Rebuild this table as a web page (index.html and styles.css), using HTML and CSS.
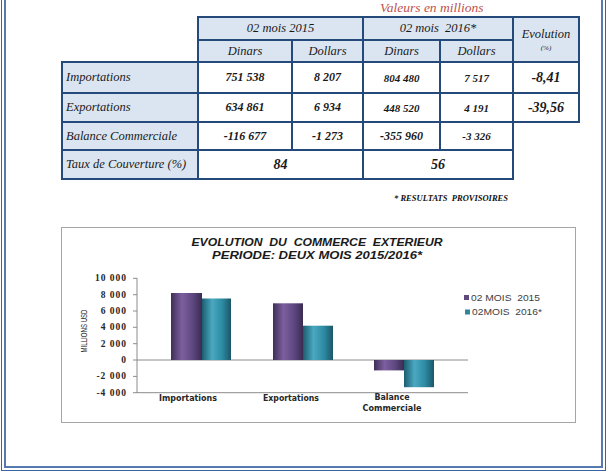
FILE: index.html
```html
<!DOCTYPE html>
<html lang="fr">
<head>
<meta charset="utf-8">
<title>Commerce extérieur</title>
<link rel="stylesheet" href="styles.css">
</head>
<body>
<div class="outer">
  <div class="inner">
    <div class="unit">Valeurs en millions</div>
    <table class="trade">
      <colgroup>
        <col class="c-lbl"><col class="c-d1"><col class="c-u1"><col class="c-d2"><col class="c-u2"><col class="c-ev">
      </colgroup>
      <tr class="h1">
        <td class="blank" rowspan="2"></td>
        <th colspan="2">02 mois 2015</th>
        <th colspan="2">02 mois&nbsp; 2016*</th>
        <th rowspan="2" class="evo">Evolution<span class="pct">(%)</span></th>
      </tr>
      <tr class="h2">
        <th>Dinars</th><th>Dollars</th><th>Dinars</th><th>Dollars</th>
      </tr>
      <tr class="r1">
        <th class="lbl">Importations</th>
        <td class="v15">751 538</td><td class="v15">8 207</td>
        <td class="v16">804 480</td><td class="v16">7 517</td>
        <td class="ev">-8,41</td>
      </tr>
      <tr class="r2">
        <th class="lbl">Exportations</th>
        <td class="v15">634 861</td><td class="v15">6 934</td>
        <td class="v16">448 520</td><td class="v16">4 191</td>
        <td class="ev">-39,56</td>
      </tr>
      <tr class="r3">
        <th class="lbl">Balance Commerciale</th>
        <td class="v15">-116 677</td><td class="v15">-1 273</td>
        <td class="v15">-355 960</td><td class="v16">-3 326</td>
        <td class="none"></td>
      </tr>
      <tr class="r4">
        <th class="lbl">Taux de Couverture (%)</th>
        <td class="big" colspan="2">84</td>
        <td class="big" colspan="2">56</td>
        <td class="none"></td>
      </tr>
    </table>
    <div class="note">* RESULTATS&nbsp; PROVISOIRES</div>
    <div class="chart">
      <svg class="plot" width="513" height="194" viewBox="62 228 513 194" xmlns="http://www.w3.org/2000/svg">
        <defs>
          <linearGradient id="gp" x1="0" y1="0" x2="1" y2="0">
            <stop offset="0" stop-color="#3f2f57"/>
            <stop offset="0.35" stop-color="#7c5f9e"/>
            <stop offset="0.7" stop-color="#5e4880"/>
            <stop offset="1" stop-color="#3a2b52"/>
          </linearGradient>
          <linearGradient id="gt" x1="0" y1="0" x2="1" y2="0">
            <stop offset="0" stop-color="#1c5d6e"/>
            <stop offset="0.35" stop-color="#4aa8c2"/>
            <stop offset="0.7" stop-color="#2d8aa2"/>
            <stop offset="1" stop-color="#1b5666"/>
          </linearGradient>
        </defs>
        <text class="ttl" x="317" y="245.5" text-anchor="middle" textLength="251" lengthAdjust="spacingAndGlyphs" xml:space="preserve">EVOLUTION  DU  COMMERCE  EXTERIEUR</text>
        <text class="ttl" x="317" y="259" text-anchor="middle" textLength="210" lengthAdjust="spacingAndGlyphs">PERIODE: DEUX MOIS 2015/2016*</text>

        <text class="yt" transform="translate(86.5 331) rotate(-90)" text-anchor="middle" textLength="43" lengthAdjust="spacingAndGlyphs">MILLIONS USD</text>

        <g class="yl" text-anchor="end">
          <text x="127" y="281.3">10 000</text>
          <text x="127" y="297.7">8 000</text>
          <text x="127" y="314">6 000</text>
          <text x="127" y="330.4">4 000</text>
          <text x="127" y="346.7">2 000</text>
          <text x="127" y="363">0</text>
          <text x="127" y="379.4">-2 000</text>
          <text x="127" y="395.7">-4 000</text>
        </g>
        <g class="ax">
          <line x1="137" y1="278" x2="137" y2="393"/>
          <line x1="133" y1="278.3" x2="137" y2="278.3"/>
          <line x1="133" y1="294.7" x2="137" y2="294.7"/>
          <line x1="133" y1="311" x2="137" y2="311"/>
          <line x1="133" y1="327.3" x2="137" y2="327.3"/>
          <line x1="133" y1="343.7" x2="137" y2="343.7"/>
          <line x1="133" y1="360" x2="137" y2="360"/>
          <line x1="133" y1="376.4" x2="137" y2="376.4"/>
          <line x1="133" y1="392.7" x2="137" y2="392.7"/>
          <line x1="137" y1="360" x2="468" y2="360"/>
          <line x1="137" y1="392.7" x2="468" y2="392.7"/>
        </g>

        <rect x="171" y="293" width="31" height="67" fill="url(#gp)"/>
        <rect x="202" y="298.5" width="29" height="61.5" fill="url(#gt)"/>
        <rect x="273" y="303.3" width="30" height="56.7" fill="url(#gp)"/>
        <rect x="303" y="325.7" width="30" height="34.3" fill="url(#gt)"/>
        <rect x="374" y="360" width="30" height="10.4" fill="url(#gp)"/>
        <rect x="404" y="360" width="30" height="27.2" fill="url(#gt)"/>

        <g class="cat" text-anchor="middle">
          <text x="188" y="400.5" textLength="58" lengthAdjust="spacingAndGlyphs">Importations</text>
          <text x="291" y="400.5" textLength="56" lengthAdjust="spacingAndGlyphs">Exportations</text>
          <text x="392" y="400" textLength="35" lengthAdjust="spacingAndGlyphs">Balance</text>
          <text x="392" y="410.5" textLength="59" lengthAdjust="spacingAndGlyphs">Commerciale</text>
        </g>

        <rect x="464" y="295" width="5" height="5" fill="#604a7b"/>
        <text class="lg" x="471" y="300.5" textLength="69" lengthAdjust="spacingAndGlyphs" xml:space="preserve">02 MOIS  2015</text>
        <rect x="465" y="309.5" width="5" height="5" fill="#31859c"/>
        <text class="lg" x="472" y="315" textLength="70" lengthAdjust="spacingAndGlyphs" xml:space="preserve">02MOIS  2016*</text>
      </svg>
    </div>
  </div>
</div>
</body>
</html>
```

FILE: styles.css
```css
html, body {
  margin: 0;
  padding: 0;
  background: #ffffff;
}

.outer {
  box-sizing: border-box;
  width: 605px;
  height: 471px;
  margin-left: 1px;
  border: 1px solid #3b63a0;
  border-top: none;
  padding: 0 2px 2px 2px;
}

.inner {
  box-sizing: border-box;
  height: 100%;
  border: 2px solid #5579b0;
  border-top: none;
  overflow: hidden;
}

.unit {
  height: 16px;
  line-height: 16px;
  padding-left: 374px;
  font-family: "Liberation Serif", serif;
  font-style: italic;
  font-size: 13.5px;
  color: #c0504d;
}

.trade {
  border-collapse: collapse;
  table-layout: fixed;
  margin-left: 55px;
  font-family: "Liberation Serif", serif;
  font-style: italic;
  color: #1a1a1a;
}

.c-lbl { width: 136px; }
.c-d1 { width: 94px; }
.c-u1 { width: 71px; }
.c-d2 { width: 77px; }
.c-u2 { width: 73px; }
.c-ev { width: 66px; }

.trade th,
.trade td {
  border: 2px solid #244a7c;
  padding: 0;
  text-align: center;
  vertical-align: middle;
}

.trade th {
  background: #dbe5f1;
  font-weight: normal;
  font-size: 12.5px;
}

.trade td.blank,
.trade td.none {
  border: none;
  background: transparent;
}

.h1 { height: 23px; }
.h2 { height: 22px; }
.r1 { height: 31px; }
.r2 { height: 29px; }
.r3 { height: 28px; }
.r4 { height: 29px; }

.trade th.evo {
  vertical-align: top;
  padding-top: 10px;
  line-height: 13px;
}

.pct {
  display: block;
  font-size: 7px;
  line-height: 10px;
  margin-top: 2px;
}

.trade th.lbl {
  text-align: left;
  padding-left: 3px;
  font-size: 12.5px;
}

.trade td {
  background: #ffffff;
  font-weight: bold;
}

.trade td.v15 { font-size: 12px; }
.trade td.v16 { font-size: 11px; }
.trade td.ev { font-size: 14px; }
.trade td.big { font-size: 14px; }

.note {
  margin-top: 12px;
  height: 12px;
  line-height: 12px;
  padding-right: 93px;
  text-align: right;
  font-family: "Liberation Serif", serif;
  font-style: italic;
  font-weight: bold;
  font-size: 8.5px;
  color: #111111;
}

.chart {
  box-sizing: border-box;
  width: 515px;
  height: 196px;
  margin-top: 23px;
  margin-left: 55px;
  border: 1px solid #a5a5a5;
}

.plot {
  display: block;
}

.ttl {
  font-family: "Liberation Sans", sans-serif;
  font-weight: bold;
  font-style: italic;
  font-size: 11px;
  fill: #1a1a1a;
}

.yt {
  font-family: "Liberation Sans", sans-serif;
  font-size: 9.5px;
  fill: #262626;
}

.yl text {
  font-family: "Liberation Serif", serif;
  font-weight: bold;
  font-size: 9.5px;
  letter-spacing: 1px;
  fill: #262626;
}

.ax line {
  stroke: #8c8c8c;
  stroke-width: 1;
}

.cat text {
  font-family: "DejaVu Sans", sans-serif;
  font-weight: bold;
  font-size: 8px;
  fill: #262626;
}

.lg {
  font-family: "Liberation Sans", sans-serif;
  font-size: 8.5px;
  fill: #404040;
}
```
